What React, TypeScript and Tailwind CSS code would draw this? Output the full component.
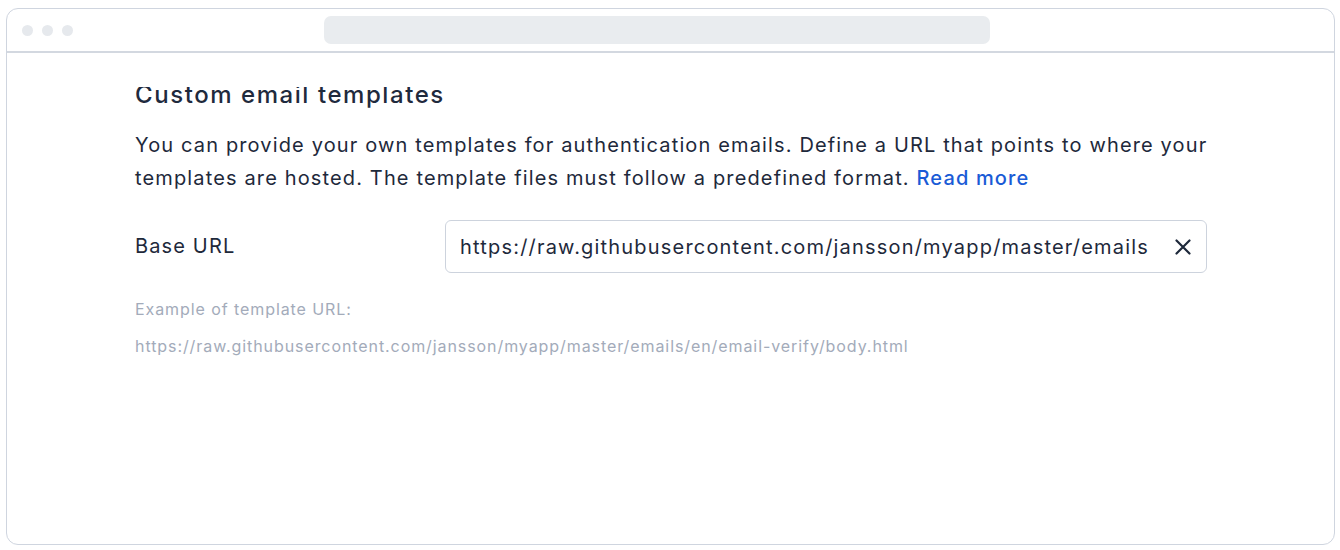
import React from "react";

export default function App() {
  return (
    <div
      className="w-[1340px] h-[550px] bg-white overflow-hidden"
      style={{ fontFamily: "Inter, 'Noto Sans', sans-serif" }}
    >
      <div className="ml-[6px] mt-[8px] w-[1329px] h-[537px] border border-[#cfd5df] rounded-[12px] flex flex-col overflow-hidden">
        <div className="h-[44px] shrink-0 border-b-2 border-[#d3d8e0] flex items-center pl-[15px]">
          <div className="flex gap-[9px]">
            <div className="w-[11px] h-[11px] rounded-full bg-[#e6e9ed]" />
            <div className="w-[11px] h-[11px] rounded-full bg-[#e6e9ed]" />
            <div className="w-[11px] h-[11px] rounded-full bg-[#e6e9ed]" />
          </div>
          <div className="ml-[251px] w-[666px] h-[28px] rounded-[7px] bg-[#e9ecef]" />
        </div>
        <div className="mt-[34px] flex-1 overflow-hidden pl-[128px]">
          <div className="w-[1072px]">
            <h2 className="-mt-[8px] text-[24px] leading-[32px] font-medium tracking-[0.065em] text-[#1f2a3d]">
              Custom email templates
            </h2>
            <p className="mt-[18px] text-[20px] leading-[33px] tracking-[0.057em] text-[#1e293b] whitespace-nowrap">
              You can provide your own templates for authentication emails. Define a URL that points to where your
              <br />
              templates are hosted. The template files must follow a predefined format.{" "}
              <span className="text-[#1a5bd6] font-medium">Read more</span>
            </p>
            <div className="mt-[25px] flex items-center">
              <div className="w-[310px] text-[20px] tracking-[0.057em] text-[#1e293b] -mt-[2px]">Base URL</div>
              <div className="flex-1 h-[53px] border border-[#cdd3dd] rounded-[6px] flex items-center pl-[14px] pr-[15px]">
                <span className="flex-1 text-[20px] tracking-[0.0595em] text-[#1e293b] whitespace-nowrap">
                  https://raw.githubusercontent.com/jansson/myapp/master/emails
                </span>
                <svg width="16" height="16" viewBox="0 0 16 16" fill="none" className="shrink-0">
                  <path d="M1.5 1.5L14.5 14.5M14.5 1.5L1.5 14.5" stroke="#1e293b" strokeWidth="2.2" strokeLinecap="round" />
                </svg>
              </div>
            </div>
            <div className="mt-[18px] text-[16px] leading-[37px] tracking-[0.0575em] text-[#a3abba]">
              <div>Example of template URL:</div>
              <div>https://raw.githubusercontent.com/jansson/myapp/master/emails/en/email-verify/body.html</div>
            </div>
          </div>
        </div>
      </div>
    </div>
  );
}
